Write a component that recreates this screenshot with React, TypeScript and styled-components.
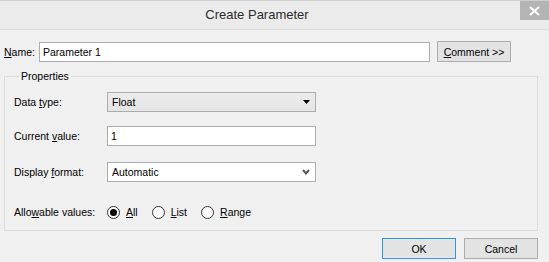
import React, { useState } from 'react';
import styled, { createGlobalStyle } from 'styled-components';

const GlobalStyle = createGlobalStyle`
  html, body {
    margin: 0;
    padding: 0;
    background: #f0f0f0;
  }
  * {
    box-sizing: border-box;
  }
`;

const Window = styled.div`
  width: 549px;
  height: 262px;
  background: #f0f0f0;
  font-family: "Liberation Sans", Arial, sans-serif;
  font-size: 10.5px;
  color: #000;
  display: flex;
  flex-direction: column;
  overflow: hidden;
`;

const TitleBar = styled.div`
  height: 30px;
  flex: none;
  display: flex;
  align-items: flex-start;
  background: #ebebeb;
  border-top: 1px solid #cfcfcf;
  border-bottom: 1px solid #dadada;
`;

const Title = styled.div`
  flex: 1;
  text-align: center;
  font-size: 13px;
  line-height: 28px;
  color: #2b2b2b;
  padding-right: 6px;
`;

const CloseButton = styled.div`
  width: 29px;
  height: 19px;
  background: #b4b4b4;
  display: flex;
  align-items: center;
  justify-content: center;
`;

const Body = styled.div`
  flex: 1;
  display: flex;
  flex-direction: column;
  padding: 11px 11px 0 4px;
`;

const NameRow = styled.div`
  display: flex;
  align-items: center;
  gap: 7px;
  height: 21px;
`;

const NameLabel = styled.label`
  width: 28px;
  flex: none;
`;

const TextBox = styled.input<{ $width: number }>`
  width: ${p => p.$width}px;
  height: 20px;
  border: 1px solid #abadb3;
  background: #fff;
  padding: 0 3px;
  font: inherit;
  color: #000;
  outline: none;
`;

const Button = styled.button<{ $default?: boolean; $width: number }>`
  width: ${p => p.$width}px;
  height: 21px;
  padding: 0;
  font: inherit;
  color: #000;
  background: #e3e3e3;
  border: 1px solid ${p => (p.$default ? '#3c8fdf' : '#adadad')};
  box-shadow: ${p => (p.$default ? 'inset 0 0 0 1px #d9ebfa' : 'none')};
`;

const Group = styled.fieldset`
  margin: 7px 0 0 0;
  padding: 0 9px 8px 9px;
  border: 1px solid #dcdcdc;
  min-width: 0;
  display: flex;
  flex-direction: column;
`;

const Legend = styled.legend`
  padding: 0 2px;
  margin-left: 5px;
  line-height: 15px;
`;

const Row = styled.div<{ $top: number }>`
  display: flex;
  align-items: center;
  margin-top: ${p => p.$top}px;
  height: 20px;
`;

const FieldLabel = styled.label`
  width: 93px;
  flex: none;
`;

const Select = styled.div<{ $plain?: boolean }>`
  width: 209px;
  height: 20px;
  display: flex;
  align-items: center;
  justify-content: space-between;
  padding: 0 5px 0 4px;
  border: 1px solid ${p => (p.$plain ? '#abadb3' : '#acacac')};
  background: ${p => (p.$plain ? '#fff' : 'linear-gradient(#ececec, #e5e5e5)')};
`;

const RadioGroup = styled.div`
  display: flex;
  align-items: center;
  gap: 14px;
`;

const RadioItem = styled.label`
  display: flex;
  align-items: center;
  gap: 6px;
`;

const RadioCircle = styled.span<{ $checked?: boolean }>`
  width: 13px;
  height: 13px;
  border-radius: 50%;
  border: 1px solid #333;
  background: #fff;
  display: flex;
  align-items: center;
  justify-content: center;

  &::after {
    content: '';
    width: 7px;
    height: 7px;
    border-radius: 50%;
    background: ${p => (p.$checked ? '#000' : 'transparent')};
  }
`;

const Footer = styled.div`
  display: flex;
  justify-content: flex-end;
  gap: 8px;
  margin-top: 7px;
`;

const Key = styled.span`
  text-decoration: underline;
`;

const CloseIcon = () => (
  <svg width="11" height="10" viewBox="0 0 11 10">
    <path d="M1 1 L10 9 M10 1 L1 9" stroke="#fff" strokeWidth="2" />
  </svg>
);

const TriangleIcon = () => (
  <svg width="7" height="4" viewBox="0 0 7 4">
    <path d="M0 0 H7 L3.5 4 Z" fill="#000" />
  </svg>
);

const ChevronIcon = () => (
  <svg width="8" height="6" viewBox="0 0 8 6">
    <path d="M1 1 L4 4.5 L7 1" stroke="#555" strokeWidth="2" fill="none" />
  </svg>
);

export default function App() {
  const [name, setName] = useState('Parameter 1');
  const [value, setValue] = useState('1');
  const [allowed, setAllowed] = useState('all');

  const radios: { id: string; key: string; rest: string }[] = [
    { id: 'all', key: 'A', rest: 'll' },
    { id: 'list', key: 'L', rest: 'ist' },
    { id: 'range', key: 'R', rest: 'ange' },
  ];

  return (
    <>
      <GlobalStyle />
      <Window>
        <TitleBar>
          <Title>Create Parameter</Title>
          <CloseButton>
            <CloseIcon />
          </CloseButton>
        </TitleBar>
        <Body>
          <NameRow>
            <NameLabel>
              <Key>N</Key>ame:
            </NameLabel>
            <TextBox $width={391} value={name} onChange={e => setName(e.target.value)} />
            <Button $width={74}>
              <Key>C</Key>omment &gt;&gt;
            </Button>
          </NameRow>
          <Group>
            <Legend>Properties</Legend>
            <Row $top={8}>
              <FieldLabel>
                Data <Key>t</Key>ype:
              </FieldLabel>
              <Select>
                <span>Float</span>
                <TriangleIcon />
              </Select>
            </Row>
            <Row $top={14}>
              <FieldLabel>
                Current <Key>v</Key>alue:
              </FieldLabel>
              <TextBox $width={209} value={value} onChange={e => setValue(e.target.value)} />
            </Row>
            <Row $top={16}>
              <FieldLabel>
                Display <Key>f</Key>ormat:
              </FieldLabel>
              <Select $plain>
                <span>Automatic</span>
                <ChevronIcon />
              </Select>
            </Row>
            <Row $top={20}>
              <FieldLabel>
                Allo<Key>w</Key>able values:
              </FieldLabel>
              <RadioGroup>
                {radios.map(r => (
                  <RadioItem key={r.id} onClick={() => setAllowed(r.id)}>
                    <RadioCircle $checked={allowed === r.id} />
                    <span>
                      <Key>{r.key}</Key>
                      {r.rest}
                    </span>
                  </RadioItem>
                ))}
              </RadioGroup>
            </Row>
          </Group>
          <Footer>
            <Button $default $width={74}>OK</Button>
            <Button $width={74}>Cancel</Button>
          </Footer>
        </Body>
      </Window>
    </>
  );
}
